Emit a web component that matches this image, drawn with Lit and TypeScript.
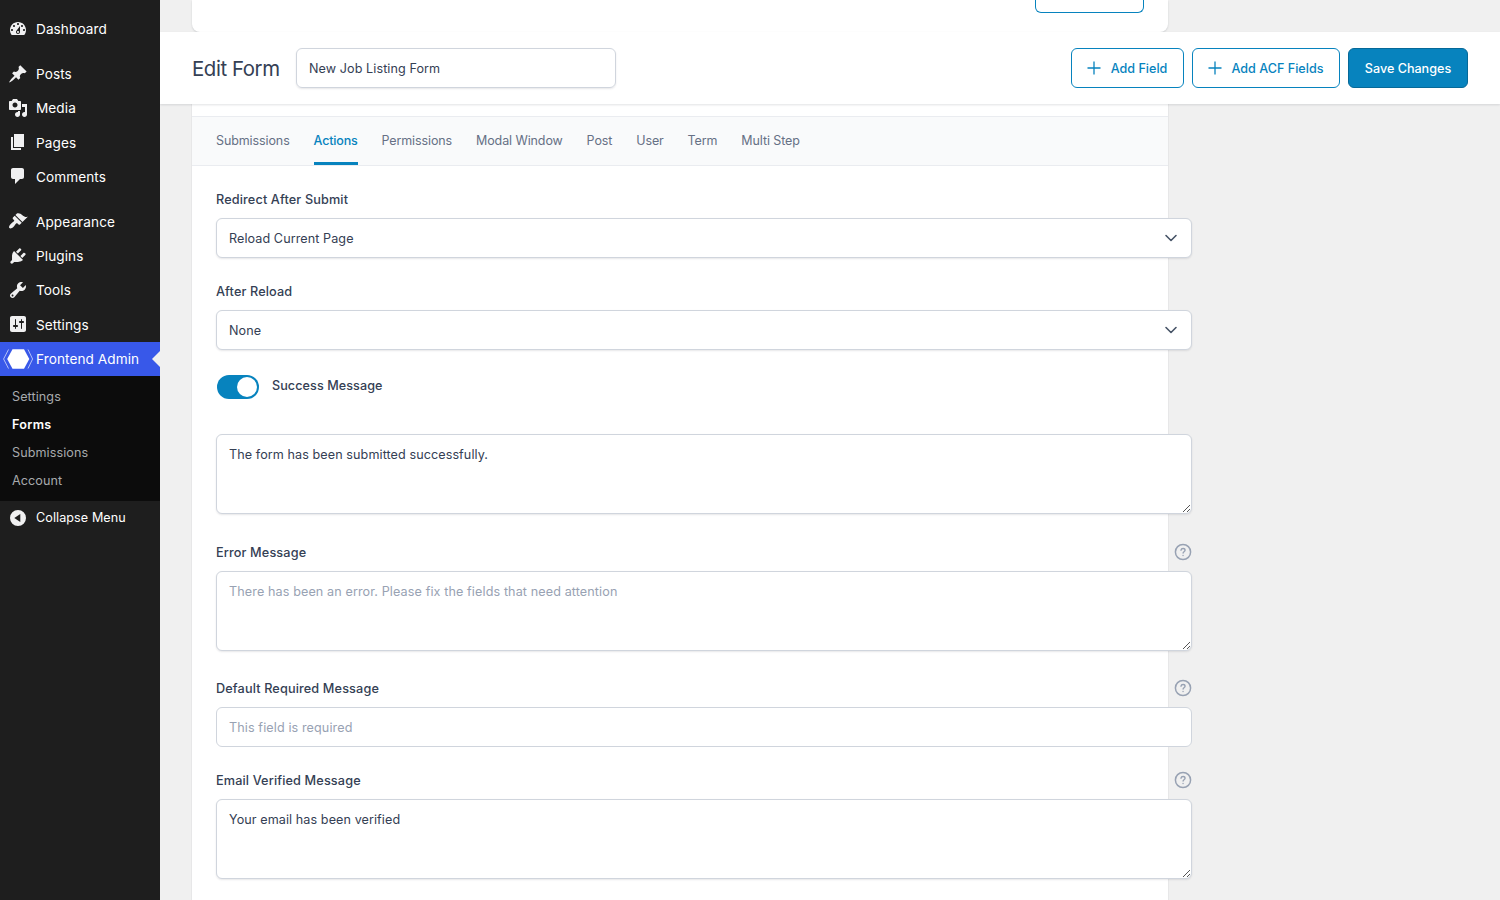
import { LitElement, html, css, svg } from "lit";
import { customElement, property } from "lit/decorators.js";
import { classMap } from "lit/directives/class-map.js";

const ICONS: Record<string, string> = {
  dashboard: "M3.76 16h12.48c1.1-1.37 1.76-3.11 1.76-5 0-4.42-3.58-8-8-8s-8 3.58-8 8c0 1.89.66 3.63 1.76 5zM10 4c.55 0 1 .45 1 1s-.45 1-1 1-1-.45-1-1 .45-1 1-1zM6 6c.55 0 1 .45 1 1s-.45 1-1 1-1-.45-1-1 .45-1 1-1zm8 0c.55 0 1 .45 1 1s-.45 1-1 1-1-.45-1-1 .45-1 1-1zm-5.37 5.55L12 7v6c0 1.1-.9 2-2 2s-2-.9-2-2c0-.57.24-1.08.63-1.45zM4 10c.55 0 1 .45 1 1s-.45 1-1 1-1-.45-1-1 .45-1 1-1zm12 0c.55 0 1 .45 1 1s-.45 1-1 1-1-.45-1-1 .45-1 1-1zm-5 3c0-.55-.45-1-1-1s-1 .45-1 1 .45 1 1 1 1-.45 1-1z",
  post: "M10.44 3.02l1.82-1.82 6.36 6.35-1.83 1.82c-1.05-.68-2.48-.57-3.41.36l-.75.75c-.92.93-1.04 2.35-.35 3.41l-1.83 1.82-2.41-2.41-2.8 2.79c-.42.42-3.38 2.71-3.8 2.29s1.86-3.39 2.28-3.81l2.79-2.79L4.1 9.36l1.83-1.82c1.05.69 2.48.57 3.4-.36l.75-.75c.93-.92 1.05-2.35.36-3.41z",
  media: "M13 11V4c0-.55-.45-1-1-1h-1.67L9 1H5L3.67 3H2c-.55 0-1 .45-1 1v7c0 .55.45 1 1 1h10c.55 0 1-.45 1-1zM7 4.5c1.38 0 2.5 1.12 2.5 2.5S8.38 9.5 7 9.5 4.5 8.38 4.5 7 5.62 4.5 7 4.5zM14 6h5v10.5c0 1.38-1.12 2.5-2.5 2.5S14 17.88 14 16.5s1.12-2.5 2.5-2.5c.17 0 .34.02.5.05V9h-3V6zm-4 8.05V13h2v3.5c0 1.38-1.12 2.5-2.5 2.5S7 17.88 7 16.5 8.12 14 9.5 14c.17 0 .34.02.5.05z",
  page: "M6 15V2h10v13H6zm-1 1h8v2H3V5h2v11z",
  comments: "M5 2h9c1.1 0 2 .9 2 2v7c0 1.1-.9 2-2 2h-2l-5 5v-5H5c-1.1 0-2-.9-2-2V4c0-1.1.9-2 2-2z",
  appearance: "M14.48 11.06L7.41 3.99l1.5-1.5c.5-.56 2.3-.47 3.51.32 1.21.8 1.43 1.28 2.91 2.1 1.18.64 2.45 1.26 4.45.85zm-.71.71L6.7 4.7 4.93 6.47c-.39.39-.39 1.02 0 1.41l1.06 1.06c.39.39.39 1.03 0 1.42-.6.6-1.43 1.11-2.21 1.69-.35.26-.7.53-1.01.84C1.43 14.23.4 16.08 1.4 17.07c.99 1 2.84-.03 4.18-1.36.31-.31.58-.66.85-1.02.57-.78 1.08-1.61 1.69-2.21.39-.39 1.02-.39 1.41 0l1.06 1.06c.39.39 1.02.39 1.41 0z",
  plugins: "M13.11 4.36L9.87 7.6 8 5.73l3.24-3.24c.35-.34 1.05-.2 1.56.32.52.51.66 1.21.31 1.55zm-8 1.77l.91-1.12 9.01 9.01-1.19.84c-.71.71-2.63 1.16-3.82 1.16H6.14L4.9 17.26c-.59.59-1.54.59-2.12 0-.59-.58-.59-1.53 0-2.12l1.24-1.24v-3.88c0-1.13.4-3.19 1.09-3.89zm7.26 3.97l3.24-3.24c.34-.35 1.04-.21 1.55.31.52.51.66 1.21.31 1.55l-3.24 3.25z",
  tools: "M16.68 9.77c-1.34 1.34-3.3 1.67-4.95.99l-5.41 6.52c-.99.99-2.59.99-3.58 0s-.99-2.59 0-3.57l6.52-5.42c-.68-1.65-.35-3.61.99-4.95 1.28-1.28 3.12-1.62 4.72-1.06l-2.89 2.89 2.82 2.82 2.86-2.87c.53 1.58.18 3.39-1.08 4.65zM3.81 16.21c.4.39 1.04.39 1.43 0 .4-.4.4-1.04 0-1.43-.39-.4-1.03-.4-1.43 0-.39.39-.39 1.03 0 1.43z",
  settings: "M18 16V4c0-1.1-.9-2-2-2H4c-1.1 0-2 .9-2 2v12c0 1.1.9 2 2 2h12c1.1 0 2-.9 2-2zM8 11h1c.55 0 1 .45 1 1s-.45 1-1 1H8v1.5c0 .28-.22.5-.5.5s-.5-.22-.5-.5V13H6c-.55 0-1-.45-1-1s.45-1 1-1h1V5.5c0-.28.22-.5.5-.5s.5.22.5.5V11zm5-2h-1c-.55 0-1-.45-1-1s.45-1 1-1h1V5.5c0-.28.22-.5.5-.5s.5.22.5.5V7h1c.55 0 1 .45 1 1s-.45 1-1 1h-1v5.5c0 .28-.22.5-.5.5s-.5-.22-.5-.5V9z",
  collapse: "M10 2a8 8 0 1 0 0 16 8 8 0 0 0 0-16zM12.3 6v8L6.3 10z",
};

const glyph = (name: string) => html`
  <svg class="icon" viewBox="0 0 20 20" width="20" height="20">
    ${svg`<path fill="currentColor" fill-rule="evenodd" d=${ICONS[name]}></path>`}
  </svg>`;

@customElement("admin-menu")
class AdminMenu extends LitElement {
  static styles = css`
    :host { display: flex; flex-direction: column; width: 160px; flex: none; box-sizing: border-box;
      padding-top: 12px; background: #1e1e1e; color: #fff; font-size: 13.6px; letter-spacing: 0.08px; }
    .group { display: flex; flex-direction: column; margin-bottom: 10.6px; }
    .group.last { margin-bottom: 0; }
    .item { display: flex; align-items: center; height: 34.3px; box-sizing: border-box; padding: 0 0 0.94px 8px; gap: 8px; position: relative;
      white-space: nowrap; line-height: 17px; }
    .group .item span { padding-top: 2px; }
    .icon { flex: none; color: #f0f0f1; }
    .item.current { background: #3858e9; padding-left: 3px; gap: 3px; }
    .item.current::after { content: ""; position: absolute; right: 0; top: 9px;
      border: 8px solid transparent; border-right-color: #f0f0f0; border-left-width: 0; }
    .sub { display: flex; flex-direction: column; background: #0c0c0c; padding: 7px 0 6px; font-size: 12.6px; color: #a7aaad; }
    .sub span { line-height: 28px; padding-left: 12px; }
    .sub .on { color: #fff; font-weight: 600; letter-spacing: 0.3px; }
    .collapse { font-size: 12.6px; line-height: normal; padding-bottom: 1px; }
  `;
  private row(icon: string, label: string) {
    return html`<div class="item">${glyph(icon)}<span>${label}</span></div>`;
  }
  render() {
    return html`
      <div class="group">${this.row("dashboard", "Dashboard")}</div>
      <div class="group">
        ${this.row("post", "Posts")}${this.row("media", "Media")}${this.row("page", "Pages")}${this.row("comments", "Comments")}
      </div>
      <div class="group last">
        ${this.row("appearance", "Appearance")}${this.row("plugins", "Plugins")}${this.row("tools", "Tools")}${this.row("settings", "Settings")}
        <div class="item current">
          <svg width="30" height="20" viewBox="0 0 30 20">
            <path d="M9.500.3h11.500L26.300 10 21 19.700H9.500L4.200 10z" fill="#fff"/>
            <path d="M5.500.5L.6 10l4.900 9.500M25 .5L29.600 10 25 19.500" fill="none" stroke="#fff" stroke-opacity=".7" stroke-width=".9"/>
          </svg>
          <span>Frontend Admin</span>
        </div>
      </div>
      <div class="sub"><span>Settings</span><span class="on">Forms</span><span>Submissions</span><span>Account</span></div>
      <div class="item collapse">${glyph("collapse")}<span>Collapse Menu</span></div>
    `;
  }
}

@customElement("form-field")
class FormField extends LitElement {
  @property() label = "";
  @property() kind: "select" | "input" | "textarea" = "input";
  @property() value = "";
  @property() placeholder = "";
  @property({ type: Boolean }) help = false;
  static styles = css`
    :host { display: block; width: 976px; }
    .head { display: flex; justify-content: space-between; align-items: center; height: 18px; margin-bottom: 10px; color: #344054;
      font-weight: 500; font-size: 12.7px; letter-spacing: 0.13px; line-height: 16px; }
    .head span { padding-top: 2px; }
    .box { box-sizing: border-box; height: 40px; padding: 0 12px; border: 1px solid #d0d5dd; border-radius: 6px; background: #fff;
      display: flex; align-items: center; justify-content: space-between; position: relative; color: #344054;
      box-shadow: 0 1px 2px rgba(16, 24, 40, 0.1); }
    .box.input { box-shadow: none; }
    .box.area { height: 80px; align-items: flex-start; padding-top: 10px; line-height: 19px; margin-bottom: 4.5px; }
    .ph { color: #98a2b3; letter-spacing: 0.11px; }
    .grip { position: absolute; right: 0; bottom: 0; }
    .chev { margin-right: 1px; }
  `;
  render() {
    const area = this.kind === "textarea";
    return html`
      ${this.label ? html`<div class="head"><span>${this.label}</span>
        ${this.help ? html`<svg width="18" height="18" viewBox="0 0 18 18" fill="none" stroke="#98a2b3" stroke-width="1.500" stroke-linecap="round">
          <circle cx="9" cy="9" r="7.600"/><path d="M7 7.200c.2-1.100 1-1.700 2.050-1.700 1.150 0 2 .75 2 1.750 0 1.450-1.950 1.550-1.950 2.750M9.050 12.400v.05" stroke-width="1.400"/></svg>` : ""}
      </div>` : ""}
      <div class=${classMap({ box: true, area, input: this.kind === "input" })}>
        <span class=${classMap({ ph: !this.value })}>${this.value || this.placeholder}</span>
        ${this.kind === "select" ? html`<svg class="chev" width="14" height="10" viewBox="0 0 14 10"><path d="M2 2.500l5 5 5-5" fill="none" stroke="#475467" stroke-width="1.600" stroke-linecap="round" stroke-linejoin="round"/></svg>` : ""}
        ${area ? html`<svg class="grip" width="9" height="9" viewBox="0 0 9 9"><path d="M1 8L8 1M5 8l3-3" stroke="#555" stroke-width="1" fill="none"/></svg>` : ""}
      </div>`;
  }
}

@customElement("app-root")
class AppRoot extends LitElement {
  static styles = css`
    :host { display: flex; width: 1500px; height: 900px; overflow: hidden; background: #f0f0f0;
      font-family: Inter, "Liberation Sans", sans-serif; font-size: 12.6px; letter-spacing: 0.08px; color: #344054; }
    .main { flex: 1; min-width: 0; display: flex; flex-direction: column; overflow: hidden; }
    .card { width: 976px; margin-left: 32px; background: #fff; box-shadow: 0 0 0 1px rgba(16, 24, 40, 0.04); }
    .above { height: 32px; flex: none; border-radius: 0 0 8px 8px; display: flex; justify-content: flex-end; box-sizing: border-box; padding-right: 24px;
      box-shadow: 0 1px 2px rgba(16, 24, 40, 0.15); }
    .stub { width: 109px; height: 13px; box-sizing: border-box; border: 1px solid #0783be; border-top: 0; border-radius: 0 0 6px 6px; }
    .bar { height: 72px; flex: none; box-sizing: border-box; padding: 0 32px; background: #fff; display: flex; align-items: center; gap: 8px;
      position: relative; box-shadow: 0 1px 2px rgba(16, 24, 40, 0.12); }
    h1 { margin: 0; padding-top: 1px; font-size: 20.4px; letter-spacing: -0.42px; font-weight: 400; width: 96px; white-space: nowrap; }
    .name { width: 320px; height: 40px; box-sizing: border-box; border: 1px solid #d0d5dd; border-radius: 6px; padding: 0 12px; display: flex; align-items: center;
      box-shadow: 0 1px 2px rgba(16, 24, 40, 0.1); margin-right: auto; }
    .btn { height: 40px; box-sizing: border-box; border: 1px solid #0783be; border-radius: 6px; color: #0783be; font-weight: 500; display: flex;
      align-items: center; justify-content: center; gap: 10px; white-space: nowrap; letter-spacing: 0; }
    .one { width: 113px; padding-right: 1px; }
    .two { width: 148px; padding-right: 1px; }
    .save { width: 120px; background: #0783be; color: #fff; border-color: #066998; }
    .body { flex: 1; padding-top: 12px; }
    .tabs { display: flex; gap: 23.9px; height: 50px; box-sizing: border-box; border: 1px solid #eaecf0; border-width: 1px 0; background: #f9fafb; padding: 0 24px;
      color: #667085; font-size: 12.5px; letter-spacing: -0.1px; }
    .tab { height: 48px; box-sizing: border-box; line-height: 48px; white-space: nowrap; }
    .tab.on { color: #0783be; border-bottom: 3px solid #0783be; font-weight: 500; letter-spacing: -0.17px; }
    .fields { padding: 24px; display: flex; flex-direction: column; gap: 24px; }
    .toggle { display: flex; align-items: center; gap: 13px; height: 24px; padding-left: 1px; font-weight: 500; margin: 1px 0 11px; }
    .toggle span { padding-bottom: 3px; }
    .switch { width: 42px; height: 24px; box-sizing: border-box; border-radius: 12px; background: #0783be; display: flex; justify-content: flex-end; padding: 2px; }
    .knob { width: 20px; height: 20px; border-radius: 50%; background: #fff; }
  `;
  render() {
    const plus = html`<svg width="14" height="14" viewBox="0 0 14 14"><path d="M7 .5v13M.5 7h13" stroke="#0783be" stroke-width="1.300"/></svg>`;
    const tabs = ["Submissions", "Actions", "Permissions", "Modal Window", "Post", "User", "Term", "Multi Step"];
    return html`
      <admin-menu></admin-menu>
      <div class="main">
        <div class="card above"><div class="stub"></div></div>
        <div class="bar">
          <h1>Edit Form</h1>
          <div class="name"><span>New Job Listing Form</span></div>
          <div class="btn one">${plus}<span>Add Field</span></div>
          <div class="btn two">${plus}<span>Add ACF Fields</span></div>
          <div class="btn save"><span>Save Changes</span></div>
        </div>
        <div class="card body">
          <div class="tabs">${tabs.map((t) => html`<div class=${classMap({ tab: true, on: t === "Actions" })}>${t}</div>`)}</div>
          <div class="fields">
            <form-field label="Redirect After Submit" kind="select" value="Reload Current Page"></form-field>
            <form-field label="After Reload" kind="select" value="None"></form-field>
            <div class="toggle"><div class="switch"><div class="knob"></div></div><span>Success Message</span></div>
            <form-field kind="textarea" value="The form has been submitted successfully."></form-field>
            <form-field label="Error Message" kind="textarea" help placeholder="There has been an error. Please fix the fields that need attention"></form-field>
            <form-field label="Default Required Message" kind="input" help placeholder="This field is required"></form-field>
            <form-field label="Email Verified Message" kind="textarea" help value="Your email has been verified"></form-field>
          </div>
        </div>
      </div>`;
  }
}
